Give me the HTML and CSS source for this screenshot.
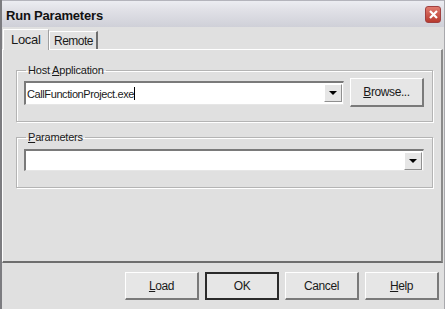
FILE: index.html
```html
<!DOCTYPE html>
<html>
<head>
    <meta name="viewport" content="width=device-width, initial-scale=1.0">
    <title>Run Parameters</title>
    <link rel="stylesheet" href="styles.css">
</head>
<body>
    <div class="window">
        <div class="titlebar">
            <span class="title">Run Parameters</span>
            <div class="close-btn">
                <svg width="9" height="9" viewBox="0 0 9 9">
                    <path d="M1 1 L8 8 M8 1 L1 8" stroke="#fff" stroke-width="2.2"/>
                </svg>
            </div>
        </div>

        <div class="tabs">
            <div class="tab active">Local</div>
            <div class="tab">Remote</div>
        </div>

        <div class="tab-page">
            <fieldset class="group host-group">
                <legend>Host <u>A</u>pplication</legend>
                <div class="row">
                    <div class="combo host-combo">
                        <span class="combo-text">CallFunctionProject.exe<span class="caret"></span></span>
                        <span class="drop-btn"><span class="arrow"></span></span>
                    </div>
                    <div class="button browse"><u>B</u>rowse...</div>
                </div>
            </fieldset>

            <fieldset class="group params-group">
                <legend><u>P</u>arameters</legend>
                <div class="combo params-combo">
                    <span class="combo-text"></span>
                    <span class="drop-btn"><span class="arrow"></span></span>
                </div>
            </fieldset>
        </div>

        <div class="footer">
            <div class="button"><u>L</u>oad</div>
            <div class="button default">OK</div>
            <div class="button">Cancel</div>
            <div class="button"><u>H</u>elp</div>
        </div>
    </div>
</body>
</html>
```

FILE: styles.css
```css
body {
    margin: 0;
    font-family: "Liberation Sans", Arial, sans-serif;
    font-size: 11px;
    color: #1a1a1a;
    background: #dcdcdc;
}
.window {
    width: 445px;
    height: 309px;
    box-sizing: border-box;
    background: #e0e0e0;
    border-left: 2px solid #7c7c80;
    border-right: 1px solid #a8a8ac;
    display: flex;
    flex-direction: column;
    overflow: hidden;
}
.titlebar {
    height: 27px;
    flex: none;
    display: flex;
    align-items: center;
    justify-content: space-between;
    padding: 0 3px 0 4px;
    background: linear-gradient(to bottom, #ecedf2 0%, #e2e2e8 30%, #cfd0d8 100%);
    border-top: 1px solid #b4b4bc;
    box-sizing: border-box;
}
.title {
    font-weight: bold;
    font-size: 13px;
    letter-spacing: -0.2px;
    color: #111;
    padding-top: 2px;
}
.close-btn {
    width: 14px;
    height: 15px;
    border-radius: 3px;
    background: linear-gradient(to bottom, #e07a6e, #b83a2e);
    border: 1px solid #a04040;
    display: flex;
    align-items: center;
    justify-content: center;
}
.tabs {
    height: 22px;
    flex: none;
    display: flex;
    align-items: flex-end;
    padding-left: 1px;
}
.tab {
    height: 18px;
    padding: 0 3px 0 4px;
    line-height: 18px;
    background: #e2e2e2;
    border-top: 1px solid #fff;
    border-left: 1px solid #fff;
    border-right: 2px solid #6e6e6e;
    font-size: 12px;
    letter-spacing: -0.5px;
    box-sizing: border-box;
}
.tab.active {
    height: 21px;
    line-height: 19px;
    width: 46px;
    padding-left: 7px;
    border-right: 1px solid #a0a0a0;
    position: relative;
    top: 1px;
    font-size: 13px;
    letter-spacing: -0.3px;
}
.tab-page {
    height: 214px;
    flex: none;
    box-sizing: border-box;
    border-top: 1px solid #fff;
    border-left: 1px solid #fff;
    border-right: 2px solid #8a8a8a;
    border-bottom: 2px solid #6e6e6e;
    margin-right: 1px;
    padding: 14px 8px 0 13px;
}
.group {
    margin: 0;
    padding: 0 0 0 7px;
    border: 1px solid #b4b4b4;
    box-shadow: inset 1px 1px 0 #fff, 1px 1px 0 #fff;
}
.group legend {
    padding: 0 2px;
    margin-left: 2px;
    font-size: 11px;
    line-height: 13px;
    letter-spacing: -0.2px;
}
.host-group {
    height: 56px;
}
.params-group {
    margin-top: 9px;
    height: 55px;
}
.row {
    display: flex;
    align-items: center;
    gap: 6px;
    margin-top: 1px;
}
.combo {
    height: 24px;
    box-sizing: border-box;
    display: flex;
    align-items: center;
    background: #fff;
    border-top: 2px solid #7a7a7a;
    border-left: 2px solid #7a7a7a;
    border-right: 1px solid #e6e6e6;
    border-bottom: 1px solid #e6e6e6;
}
.host-combo {
    width: 320px;
}
.params-combo {
    width: 400px;
    height: 22px;
    margin-top: 5px;
}
.combo-text {
    flex: 1;
    padding-left: 1px;
    font-size: 11px;
    letter-spacing: -0.4px;
}
.caret {
    display: inline-block;
    width: 1px;
    height: 13px;
    background: #000;
    vertical-align: -2px;
}
.drop-btn {
    width: 16px;
    height: 16px;
    margin-right: 1px;
    background: #e6e6e6;
    border: 1px solid #909090;
    border-top-color: #fff;
    border-left-color: #fff;
    display: flex;
    align-items: center;
    justify-content: center;
}
.arrow {
    width: 0;
    height: 0;
    border-left: 4px solid transparent;
    border-right: 4px solid transparent;
    border-top: 4px solid #000;
}
.button {
    width: 74px;
    height: 28px;
    box-sizing: border-box;
    display: flex;
    align-items: center;
    justify-content: center;
    background: #e6e6e6;
    border-top: 1px solid #fff;
    border-left: 1px solid #fff;
    border-right: 2px solid #7a7a7a;
    border-bottom: 2px solid #7a7a7a;
    font-size: 12px;
    letter-spacing: -0.4px;
}
.browse {
    height: 29px;
}
.button.default {
    border: 2px solid #2a2a2a;
}
.footer {
    display: flex;
    justify-content: flex-end;
    gap: 6px;
    padding: 9px 5px 0 0;
}
```
